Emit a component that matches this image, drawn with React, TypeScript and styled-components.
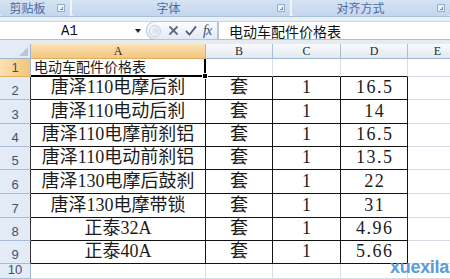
import React from 'react';
import styled, { createGlobalStyle } from 'styled-components';

const Global = createGlobalStyle`
  *, *::before, *::after { box-sizing: border-box; }
  html, body { margin: 0; padding: 0; width: 450px; height: 279px; overflow: hidden; background: #fff; }
  #root { width: 450px; height: 279px; }
`;

const Page = styled.div`
  position: relative;
  width: 450px;
  height: 279px;
  display: flex;
  flex-direction: column;
  overflow: hidden;
  background: #fff;
  font-family: "Noto Sans CJK SC", sans-serif;
`;

const Ribbon = styled.div`
  height: 17px;
  flex: none;
  display: flex;
  background: #e6eef8;
  border-bottom: 1px solid #a9c0dd;
`;

const Group = styled.div<{ $w: number; $shift: number }>`
  width: ${p => p.$w}px;
  flex: none;
  display: flex;
  align-items: center;
  padding-right: 5px;
  background: linear-gradient(#d6e3f3, #c3d6ee);
  border-right: 2px solid #eef4fb;
  border-radius: 0 0 3px 3px;
  &:last-child { flex: 1; border-right: none; }
  & > span:first-child { padding-right: ${p => p.$shift}px; }
`;

const GroupLabel = styled.span`
  flex: 1;
  text-align: center;
  font-size: 12px;
  line-height: 16px;
  color: #4d6c9d;
`;

const Launcher = styled.span`
  width: 8px;
  height: 8px;
  flex: none;
  border: 1px solid #97aecb;
  background: #e9f0f8;
  position: relative;
  &::after {
    content: '';
    position: absolute;
    right: 1px;
    bottom: 1px;
    width: 3px;
    height: 3px;
    border-right: 1px solid #6e87a9;
    border-bottom: 1px solid #6e87a9;
  }
`;

const Spacer = styled.div<{ $h: number; $bg: string }>`
  height: ${p => p.$h}px;
  flex: none;
  background: ${p => p.$bg};
`;

const FormulaBar = styled.div`
  height: 19px;
  flex: none;
  display: flex;
  background: #fff;
  border-top: 1px solid #c9d6e8;
  border-bottom: 1px solid #aebfd6;
`;

const NameBox = styled.div`
  width: 146px;
  flex: none;
  display: flex;
  align-items: center;
  padding-right: 5px;
`;

const NameText = styled.span`
  flex: 1;
  text-align: center;
  font-family: "Liberation Mono", monospace;
  font-size: 14px;
  color: #111;
  padding-left: 4px;
`;

const DropArrow = styled.span`
  width: 0;
  height: 0;
  border-left: 3px solid transparent;
  border-right: 3px solid transparent;
  border-top: 4px solid #222;
`;

const FxPill = styled.div`
  width: 72px;
  flex: none;
  display: flex;
  align-items: center;
  gap: 6px;
  padding-left: 2px;
  background: linear-gradient(#fbfcfe, #e3eaf4);
  border: 1px solid #b3c4db;
  border-radius: 9px 0 0 9px;
  margin: -1px 0;
`;

const Grip = styled.span`
  width: 12px;
  height: 12px;
  border-radius: 50%;
  border: 1px solid #c4cfdd;
  background: radial-gradient(circle at 60% 50%, #dde4ee 30%, #f4f7fb 70%);
`;

const FxIcon = styled.span`
  display: flex;
  align-items: center;
  justify-content: center;
  width: 12px;
`;

const FxText = styled.span`
  font-family: "Liberation Serif", serif;
  font-style: italic;
  font-size: 14px;
  color: #3d4f6b;
  letter-spacing: -1px;
`;

const FormulaText = styled.div`
  flex: 1;
  display: flex;
  align-items: center;
  padding-left: 10px;
  font-size: 14px;
  color: #111;
  border-left: 1px solid #b3c4db;
`;

const Grid = styled.div`
  flex: 1;
  display: grid;
  grid-template-columns: 31px 175px 67px 68px 67px 60px;
  grid-template-rows: 15px 18px 23px 24px 23px 23px 24px 24px 23px 23px 15px;
  overflow: hidden;
`;

const Corner = styled.div`
  position: relative;
  background: #e3ebf6;
  border-right: 1px solid #9eb6ce;
  border-bottom: 1px solid #9eb6ce;
  &::after {
    content: '';
    position: absolute;
    right: 2px;
    bottom: 2px;
    width: 0;
    height: 0;
    border-left: 9px solid transparent;
    border-bottom: 9px solid #b9c6d8;
  }
`;

const ColHeader = styled.div<{ $active?: boolean }>`
  display: flex;
  align-items: center;
  justify-content: center;
  font-family: "Liberation Serif", serif;
  font-size: 12px;
  color: #2a2a2a;
  background: ${p => (p.$active ? 'linear-gradient(#fae2b8, #f4c67d)' : 'linear-gradient(#f8fafd, #e3e9f2)')};
  border-right: 1px solid ${p => (p.$active ? '#e3ae5c' : '#a8bdd4')};
  border-bottom: 1px solid ${p => (p.$active ? '#e3ae5c' : '#9eb6ce')};
`;

const RowHeader = styled.div<{ $active?: boolean; $dark?: boolean }>`
  display: flex;
  align-items: flex-end;
  justify-content: center;
  padding-bottom: 1px;
  font-family: "Liberation Sans", sans-serif;
  font-size: 13px;
  line-height: 15px;
  color: #3f5272;
  background: ${p => (p.$active ? 'linear-gradient(90deg, #fbe0b0, #f5c676)' : '#e3ebf6')};
  border-right: 1px solid ${p => (p.$dark ? '#333' : '#9eb6ce')};
  border-bottom: 1px solid ${p => (p.$active ? '#e3ae5c' : '#a8bdd4')};
`;

const Cell = styled.div<{ $box?: boolean; $topBox?: boolean; $left?: boolean; $small?: boolean }>`
  display: flex;
  align-items: flex-end;
  justify-content: ${p => (p.$left ? 'flex-start' : 'center')};
  padding: 0 0 1px ${p => (p.$left ? '3px' : '0')};
  font-family: "Liberation Serif", "Noto Sans CJK SC", serif;
  font-size: ${p => (p.$small ? '14px' : '18px')};
  line-height: ${p => (p.$small ? '16px' : '21px')};
  color: #1c1c1c;
  white-space: nowrap;
  overflow: visible;
  border-right: 1px solid ${p => (p.$box ? '#111' : '#d6dde8')};
  border-bottom: 1px solid ${p => (p.$box || p.$topBox ? '#111' : '#d6dde8')};
`;

const Num = styled.span`
  letter-spacing: 1.5px;
  margin-right: -1.5px;
`;

const SelectedCell = styled(Cell)`
  position: relative;
  font-family: "Noto Sans CJK SC", sans-serif;
  border-right: 2px solid #000;
  border-bottom: 2px solid #000;
`;

const FillHandle = styled.span`
  position: absolute;
  right: -4px;
  bottom: -4px;
  width: 6px;
  height: 6px;
  background: #000;
  border: 1px solid #fff;
  z-index: 2;
`;

const Watermark = styled.div`
  position: absolute;
  right: 1px;
  bottom: 3px;
  font-family: "Liberation Sans", sans-serif;
  font-weight: bold;
  font-size: 18px;
  line-height: 18px;
  color: #4b92d4;
  opacity: 0.9;
  letter-spacing: -0.3px;
`;

const rows: [string, string, string][] = [
  ['唐泽110电摩后刹', '1', '16.5'],
  ['唐泽110电动后刹', '1', '14'],
  ['唐泽110电摩前刹铝', '1', '16.5'],
  ['唐泽110电动前刹铝', '1', '13.5'],
  ['唐泽130电摩后鼓刹', '1', '22'],
  ['唐泽130电摩带锁', '1', '31'],
  ['正泰32A', '1', '4.96'],
  ['正泰40A', '1', '5.66'],
];

export default function App() {
  return (
    <Page>
      <Global />
      <Ribbon>
        <Group $w={72} $shift={2}>
          <GroupLabel>剪贴板</GroupLabel>
          <Launcher />
        </Group>
        <Group $w={220} $shift={12}>
          <GroupLabel>字体</GroupLabel>
          <Launcher />
        </Group>
        <Group $w={158} $shift={8}>
          <GroupLabel>对齐方式</GroupLabel>
          <Launcher />
        </Group>
      </Ribbon>
      <Spacer $h={4} $bg="#eaf0f8" />
      <FormulaBar>
        <NameBox>
          <NameText>A1</NameText>
          <DropArrow />
        </NameBox>
        <FxPill>
          <Grip />
          <FxIcon>
            <svg width="11" height="11" viewBox="0 0 11 11">
              <path d="M2 2 L9 9 M9 2 L2 9" stroke="#5b6b82" strokeWidth="1.8" strokeLinecap="round" />
            </svg>
          </FxIcon>
          <FxIcon>
            <svg width="13" height="12" viewBox="0 0 13 12">
              <path d="M1.5 6.5 L4.8 10 L11.5 1.5" stroke="#4a5c78" strokeWidth="1.9" fill="none" strokeLinecap="round" strokeLinejoin="round" />
            </svg>
          </FxIcon>
          <FxText>fx</FxText>
        </FxPill>
        <FormulaText>电动车配件价格表</FormulaText>
      </FormulaBar>
      <Spacer $h={4} $bg="#e6ebf2" />
      <Grid>
        <Corner />
        <ColHeader $active>A</ColHeader>
        <ColHeader>B</ColHeader>
        <ColHeader>C</ColHeader>
        <ColHeader>D</ColHeader>
        <ColHeader>E</ColHeader>

        <RowHeader $active>1</RowHeader>
        <SelectedCell $left $small>
          电动车配件价格表
          <FillHandle />
        </SelectedCell>
        <Cell $topBox />
        <Cell $topBox />
        <Cell $topBox />
        <Cell />

        {rows.map(([name, qty, price], i) => (
          <React.Fragment key={i}>
            <RowHeader $dark>{i + 2}</RowHeader>
            <Cell $box>{name}</Cell>
            <Cell $box>套</Cell>
            <Cell $box>{qty}</Cell>
            <Cell $box>
              <Num>{price}</Num>
            </Cell>
            <Cell />
          </React.Fragment>
        ))}

        <RowHeader>10</RowHeader>
        <Cell />
        <Cell />
        <Cell />
        <Cell />
        <Cell />
      </Grid>
      <Watermark>xuexila</Watermark>
    </Page>
  );
}
